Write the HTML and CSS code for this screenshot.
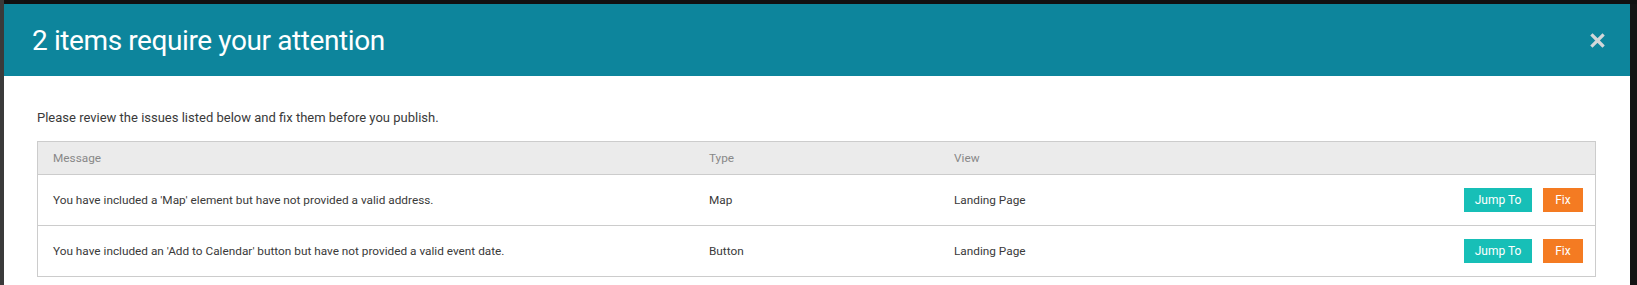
FILE: index.html
```html
<!DOCTYPE html>
<html lang="en">
<head>
  <meta charset="UTF-8">
  <title>Publish Issues</title>
  <link rel="stylesheet" href="styles.css">
</head>
<body>

<div class="backdrop">
  <div class="modal">
    <div class="modal-header">
      <h2 class="modal-title">2 items require your attention</h2>
      <button class="close" aria-label="Close">
        <svg width="15" height="15" viewBox="0 0 15 15">
          <path d="M2.5 2.5 L12.5 12.5 M12.5 2.5 L2.5 12.5" stroke="#d3d7d9" stroke-width="3.2" stroke-linecap="square"/>
        </svg>
      </button>
    </div>

    <div class="modal-body">
      <p class="intro">Please review the issues listed below and fix them before you publish.</p>

      <table class="issues">
        <thead>
          <tr>
            <th class="col-message">Message</th>
            <th class="col-type">Type</th>
            <th class="col-view">View</th>
            <th class="col-actions"></th>
          </tr>
        </thead>
        <tbody>
          <tr>
            <td>You have included a 'Map' element but have not provided a valid address.</td>
            <td>Map</td>
            <td>Landing Page</td>
            <td class="actions">
              <button class="btn btn-jump">Jump To</button>
              <button class="btn btn-fix">Fix</button>
            </td>
          </tr>
          <tr>
            <td>You have included an 'Add to Calendar' button but have not provided a valid event date.</td>
            <td>Button</td>
            <td>Landing Page</td>
            <td class="actions">
              <button class="btn btn-jump">Jump To</button>
              <button class="btn btn-fix">Fix</button>
            </td>
          </tr>
        </tbody>
      </table>
    </div>
  </div>
</div>

</body>
</html>
```

FILE: styles.css
```css
body {
  margin: 0;
  background: #141414;
  font-family: Roboto, "Liberation Sans", sans-serif;
  color: #333;
  height: 285px;
  overflow: hidden;
}

.backdrop {
  padding: 4px 7px 0 4px;
  background: linear-gradient(to right, #3a3a3a 0, #3a3a3a 4px, transparent 4px),
              linear-gradient(to bottom, #111 0, #111 4px, transparent 4px);
}

.modal {
  background: #fff;
  min-height: 300px;
}

.modal-header {
  background: #0d859c;
  height: 72px;
  display: flex;
  align-items: center;
  justify-content: space-between;
  padding: 0 25px 0 28px;
}

.modal-title {
  margin: 0;
  color: #fff;
  font-size: 28px;
  font-weight: 400;
  letter-spacing: -0.4px;
}

.close {
  background: none;
  border: none;
  padding: 0;
  cursor: pointer;
  display: flex;
}

.modal-body {
  padding: 32px 34px 0 33px;
}

.intro {
  margin: 0 0 13px;
  font-size: 13px;
  line-height: 20px;
  color: #3a3a3a;
}

.issues {
  width: 100%;
  border-collapse: collapse;
  border: 1px solid #ccc;
  font-size: 11.8px;
}

.issues th {
  background: #ebebeb;
  color: #888;
  font-weight: 400;
  text-align: left;
  height: 32px;
  padding: 0 15px;
  border-bottom: 1px solid #ccc;
}

.issues td {
  height: 50px;
  padding: 0 15px;
  border-bottom: 1px solid #ccc;
  color: #3a3a3a;
}

.col-message { width: 626px; }
.col-type { width: 215px; }

.actions {
  text-align: right;
  padding-right: 12px !important;
  white-space: nowrap;
}

.btn {
  border: none;
  color: #fff;
  font-family: Roboto, "Liberation Sans", sans-serif;
  font-size: 12px;
  height: 24px;
  padding: 0;
  cursor: pointer;
  vertical-align: middle;
}

.btn-jump {
  background: #17bfb7;
  width: 68px;
}

.btn-fix {
  background: #f47b22;
  width: 40px;
  margin-left: 8px;
}
```
